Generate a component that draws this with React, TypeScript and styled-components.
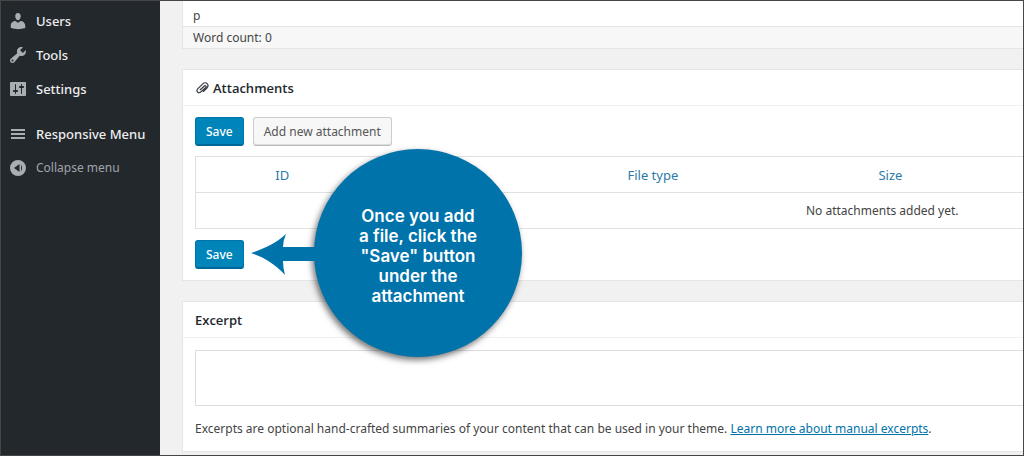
import React from "react";
import styled, { createGlobalStyle } from "styled-components";

const GlobalStyle = createGlobalStyle`
  *, *::before, *::after { box-sizing: border-box; }
  body {
    margin: 0;
    background: #f1f1f1;
    color: #444;
    font-family: "Noto Sans", "Open Sans", sans-serif;
    font-size: 12px;
    line-height: 20px;
  }
`;

const Page = styled.div`
  display: flex;
  min-height: 100vh;
  border: 1px solid #45464a;
  overflow: hidden;
`;

const Sidebar = styled.nav`
  flex: 0 0 159px;
  background: #23282d;
  padding-top: 3px;
`;

const MenuList = styled.ul`
  list-style: none;
  margin: 0 0 11px;
  padding: 0;
`;

const menuEntry = `
  display: flex;
  align-items: center;
  gap: 8px;
  width: 100%;
  height: 34px;
  padding: 0 0 0 7px;
  border: 0;
  background: none;
  white-space: nowrap;
  text-decoration: none;
`;

const MenuLink = styled.a`
  ${menuEntry}
  color: #eee;
  font-size: 13px;
  font-weight: 500;
`;

const CollapseButton = styled.button`
  ${menuEntry}
  color: #a0a5aa;
  font: inherit;
`;

const MenuIcon = styled.svg`
  flex: none;
  width: 20px;
  height: 20px;
  fill: #a9aeb3;
`;

const Main = styled.main`
  flex: 1;
  min-width: 0;
  padding-left: 22px;
  display: flex;
  flex-direction: column;
  gap: 20px;
`;

const Panel = styled.section`
  background: #fff;
  border: 1px solid #e5e5e5;
  border-right: 0;
`;

const EditorPanel = styled(Panel)`
  border-top: 0;
`;

const EditorPath = styled.div`
  height: 26px;
  padding: 5px 10px 0;
  border-bottom: 1px solid #e5e5e5;
`;

const WordCount = styled.div`
  height: 21px;
  padding: 1px 10px 0;
  background: #f7f7f7;
`;

const PanelTitle = styled.h2`
  display: flex;
  align-items: center;
  gap: 4px;
  height: 36px;
  margin: 0;
  padding: 0 12px;
  border-bottom: 1px solid #f1f1f1;
  color: #23282d;
  font-family: "Open Sans", "Noto Sans", sans-serif;
  font-size: 13px;
  font-weight: 600;
`;

const ClipIcon = styled.svg`
  width: 14px;
  height: 14px;
  fill: none;
  stroke: #32373c;
  stroke-width: 2;
  stroke-linecap: round;
  stroke-linejoin: round;
`;

const PanelBody = styled.div`
  padding: 11px 0 11px 12px;
`;

const ExcerptBody = styled.div`
  padding: 12px 0 12px 12px;
`;

const Actions = styled.div`
  position: relative;
  display: flex;
  gap: 9px;
`;

const Button = styled.button<{ $primary?: boolean }>`
  height: 29px;
  padding: 0 10px 1px;
  border: 1px solid ${(p) => (p.$primary ? "#0073aa" : "#ccc")};
  border-bottom-color: ${(p) => (p.$primary ? "#006799" : "#bbb")};
  border-radius: 3px;
  background: ${(p) => (p.$primary ? "#0085ba" : "#f7f7f7")};
  box-shadow: inset 0 -1px 0 ${(p) => (p.$primary ? "#006799" : "#ddd")};
  color: ${(p) => (p.$primary ? "#fff" : "#555")};
  font-family: inherit;
  font-size: 12px;
  font-weight: ${(p) => (p.$primary ? 500 : 400)};
`;

const TableWrap = styled.div`
  margin: 10px 0 11px;
  overflow: hidden;
`;

const Table = styled.table`
  width: 166%;
  table-layout: fixed;
  border-collapse: collapse;
  border: 1px solid #e1e1e1;
  text-align: center;

  th, td {
    height: 36px;
    padding: 0;
    border-bottom: 1px solid #e1e1e1;
    font-weight: 400;
  }

  th {
    font-size: 13px;
  }

  a {
    color: #2b7aa8;
    text-decoration: none;
  }
`;

const Callout = styled.div`
  position: absolute;
  z-index: 1;
  left: 56px;
  top: -91px;
  display: flex;
  align-items: center;
`;

const Arrow = styled.svg`
  position: relative;
  z-index: 1;
  width: 67px;
  height: 42px;
  margin-right: -4px;
  margin-top: 4px;
  fill: #0073aa;
`;

const Bubble = styled.p`
  display: grid;
  place-content: center;
  width: 208px;
  height: 208px;
  margin: 0;
  padding-top: 6px;
  border-radius: 50%;
  background: #0073aa;
  box-shadow: -2px 3px 6px rgba(0, 0, 0, 0.55);
  color: #fff;
  font-family: Inter, "Open Sans", sans-serif;
  font-size: 17px;
  font-weight: 600;
  text-align: center;
`;

const ExcerptBox = styled.textarea`
  display: block;
  width: 100%;
  height: 56px;
  border: 1px solid #ddd;
  border-right: 0;
  background: #fff;
  resize: none;
  font: inherit;
`;

const Hint = styled.p`
  margin: 13px 0 0;
  white-space: nowrap;

  a { color: #0073aa; }
`;

const menu = [
  {
    label: "Users",
    d: "M10 9.25c-2.27 0-2.73-3.44-2.73-3.44C7 4.02 7.82 2 9.97 2c2.16 0 2.98 2.02 2.71 3.81 0 0-.41 3.44-2.68 3.44zm0 2.57L12.72 10c2.39 0 4.52 2.33 4.52 4.53v2.49s-3.65 1.13-7.24 1.13c-3.65 0-7.24-1.13-7.24-1.13v-2.49c0-2.25 1.94-4.48 4.47-4.48z",
  },
  {
    label: "Tools",
    d: "M16.68 9.77c-1.34 1.34-3.3 1.67-4.95.99l-5.41 6.52c-.99.99-2.59.99-3.58 0s-.99-2.59 0-3.57l6.52-5.42c-.68-1.65-.35-3.61.99-4.95 1.28-1.28 3.12-1.62 4.72-1.06l-2.89 2.89 2.82 2.82 2.86-2.87c.53 1.58.18 3.39-1.08 4.65zM3.81 16.21c.4.39 1.04.39 1.43 0 .4-.4.4-1.04 0-1.43-.39-.4-1.03-.4-1.43 0-.39.39-.39 1.03 0 1.43z",
  },
  {
    label: "Settings",
    d: "M18 16V4c0-.55-.45-1-1-1H3c-.55 0-1 .45-1 1v12c0 .55.45 1 1 1h14c.55 0 1-.45 1-1zM8 11h1c.55 0 1 .45 1 1s-.45 1-1 1H8v1.5c0 .28-.22.5-.5.5s-.5-.22-.5-.5V13H6c-.55 0-1-.45-1-1s.45-1 1-1h1V5.5c0-.28.22-.5.5-.5s.5.22.5.5V11zm5-2h-1c-.55 0-1-.45-1-1s.45-1 1-1h1V5.5c0-.28.22-.5.5-.5s.5.22.5.5V7h1c.55 0 1 .45 1 1s-.45 1-1 1h-1v5.5c0 .28-.22.5-.5.5s-.5-.22-.5-.5V9z",
  },
];

export default function App() {
  return (
    <>
      <GlobalStyle />
      <Page>
        <Sidebar>
          <MenuList>
            {menu.map((item) => (
              <li key={item.label}>
                <MenuLink href="#">
                  <MenuIcon viewBox="0 0 20 20" aria-hidden="true">
                    <path d={item.d} />
                  </MenuIcon>
                  {item.label}
                </MenuLink>
              </li>
            ))}
          </MenuList>
          <MenuLink href="#">
            <MenuIcon viewBox="0 0 20 20" aria-hidden="true">
              <path d="M3 5h14v2H3zM3 9h14v2H3zM3 13h14v2H3z" />
            </MenuIcon>
            Responsive Menu
          </MenuLink>
          <CollapseButton type="button">
            <MenuIcon viewBox="0 0 20 20" aria-hidden="true">
              <path
                fillRule="evenodd"
                d="M10 2a8 8 0 1 0 0 16 8 8 0 0 0 0-16zM11.500 6v8L6 10zM13 6.500q2 3.500 0 7z"
              />
            </MenuIcon>
            Collapse menu
          </CollapseButton>
        </Sidebar>
        <Main>
          <EditorPanel>
            <EditorPath>p</EditorPath>
            <WordCount>Word count: 0</WordCount>
          </EditorPanel>
          <Panel>
            <PanelTitle>
              <ClipIcon viewBox="0 0 24 24" aria-hidden="true">
                <path d="M9 15l7-6.500c2-1.800 4.200.6 2.400 2.500l-8 7.500c-4.500 4-9.500-1-5.500-5.500l8.500-8c5.500-5 12 1.500 7 7l-6 6" />
              </ClipIcon>
              Attachments
            </PanelTitle>
            <PanelBody>
              <Actions>
                <Button type="button" $primary>Save</Button>
                <Button type="button">Add new attachment</Button>
              </Actions>
              <TableWrap>
                <Table>
                  <colgroup>
                    <col width="12.6%" />
                    <col width="12.5%" />
                    <col width="16.4%" />
                    <col width="18.2%" />
                    <col />
                  </colgroup>
                  <thead>
                    <tr>
                      <th scope="col"><a href="#">ID</a></th>
                      <td />
                      <th scope="col"><a href="#">File type</a></th>
                      <th scope="col"><a href="#">Size</a></th>
                      <td />
                    </tr>
                  </thead>
                  <tbody>
                    <tr>
                      <td colSpan={5}>No attachments added yet.</td>
                    </tr>
                  </tbody>
                </Table>
              </TableWrap>
              <Actions>
                <Button type="button" $primary>Save</Button>
                <Callout role="note">
                  <Arrow viewBox="0 0 67 42" aria-hidden="true">
                    <path d="M0 19C12 15 24 10 35 0q-3 7-3 13H67V27H32q0 7 2 14C24 30 12 23 0 19z" />
                  </Arrow>
                  <Bubble>
                    <span>
                      Once you add<br />
                      a file, click the<br />
                      "Save" button<br />
                      under the<br />
                      attachment
                    </span>
                  </Bubble>
                </Callout>
              </Actions>
            </PanelBody>
          </Panel>
          <Panel>
            <PanelTitle>Excerpt</PanelTitle>
            <ExcerptBody>
              <ExcerptBox aria-label="Excerpt" />
              <Hint>
                Excerpts are optional hand-crafted summaries of your content that can be used in your theme.{" "}
                <a href="#">Learn more about manual excerpts</a>.
              </Hint>
            </ExcerptBody>
          </Panel>
        </Main>
      </Page>
    </>
  );
}
